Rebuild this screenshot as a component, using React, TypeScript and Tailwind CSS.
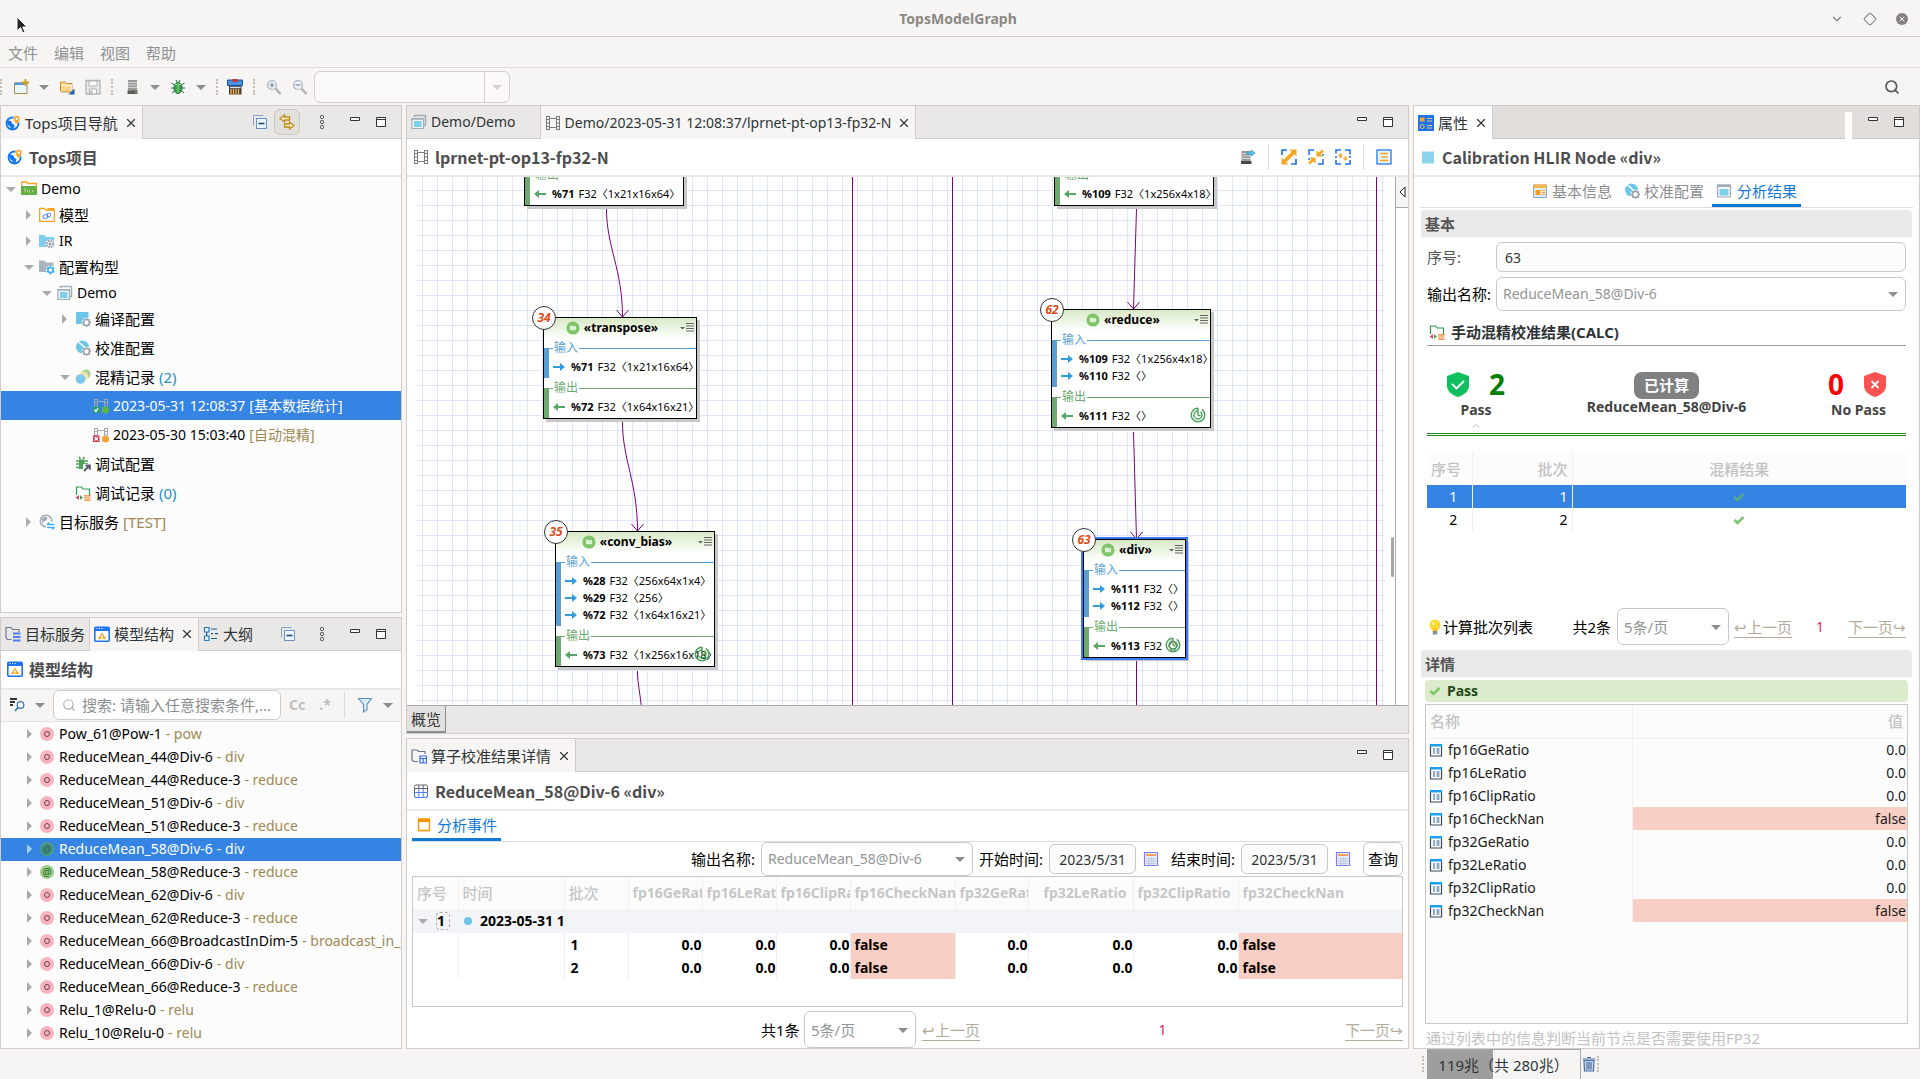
import { ReactNode } from 'react';
import clsx from 'clsx';
import { ChevronDown, ChevronUp, Diamond, Search, X } from 'lucide-react';

/* ---------- icons ---------- */

function Svg({ children, size = 'size-4' }: { children: ReactNode; size?: string }) {
  return (
    <svg viewBox="0 0 16 16" className={clsx(size, 'shrink-0')} fill="none">
      {children}
    </svg>
  );
}

const GEAR = (
  <g>
    <circle cx="11.5" cy="11.5" r="3" fill="none" stroke="#98a2ab" strokeWidth="1.6" />
    <path d="M11.5 7v1.5M11.5 14.500v1.500M7 11.500h1.500M14.500 11.500h1.500M8.300 8.300l1 1M13.700 13.700l1 1M8.300 14.700l1-1M13.700 9.300l1-1" stroke="#98a2ab" strokeWidth="1.300" />
  </g>
);

const FILM = (
  <path d="M1.500 1v14M4.500 1v14M11.500 1v14M14.500 1v14M4.500 3.500h7M4.500 12.500h7M1.500 1.500h3M1.500 4.500h3M1.500 8h3M1.500 11.500h3M1.500 14.500h3M11.500 1.500h3M11.500 4.500h3M11.500 8h3M11.500 11.500h3M11.500 14.500h3" />
);

function Icon({ name, size }: { name: string; size?: string }) {
  switch (name) {
    case 'globe':
      return (
        <Svg size={size}>
          <circle cx="7.500" cy="8.500" r="6" stroke="#1677f0" strokeWidth="1.800" />
          <path d="M2 5.500l4 .5 1.500 3 2 1-.5 3-2 1.500-2-3-2.500-2z" fill="#1677f0" />
          <path d="M11.500 9.500C9 6.500 8.500 5 8.500 3.700a3.200 3.200 0 016.400 0c0 1.300-.9 2.800-3.400 5.800z" fill="#f5a623" stroke="#fff" strokeWidth=".5" />
          <circle cx="11.700" cy="3.700" r="1.200" fill="#fff" />
        </Svg>
      );
    case 'square':
      return (
        <Svg size={size}>
          <path d="M2 2.500h12v12H2z" fill="#8dd3ed" />
        </Svg>
      );
    case 'topsFolder':
      return (
        <Svg size={size}>
          <path d="M.7 5V1h5l1.300 1.500h8.300V5" stroke="#f5a623" strokeWidth="1.300" />
          <path d="M0 5h16v9H0z" fill="#65b042" />
          <path d="M3 8h2M4 8v3M6.500 9v2M8.500 9v3M11.500 9v2" stroke="#c5e6b4" strokeWidth=".8" />
        </Svg>
      );
    case 'modelFolder':
      return (
        <Svg size={size}>
          <path d="M.7 14.300V1.500h5L7 3h8.300v11.300z" fill="#fff" stroke="#f5a623" strokeWidth="1.300" />
          <path d="M8.500 1h7v2.500h-7z" fill="#f5a623" />
          <ellipse cx="6.500" cy="9.500" rx="2.500" ry="2" stroke="#4a86e8" transform="rotate(-20 6.500 9.500)" />
          <ellipse cx="9.800" cy="8" rx="2" ry="1.800" stroke="#4a86e8" />
        </Svg>
      );
    case 'irFolder':
      return (
        <Svg size={size}>
          <path d="M0 2h5.500L7 4h8v10H0z" fill="#7fcdea" />
          <circle cx="11" cy="11" r="4.500" fill="#fff" />
          <circle cx="11" cy="11" r="3.200" stroke="#98a2ab" strokeWidth="2.200" strokeDasharray="1.500 1" />
          <circle cx="11" cy="11" r="1.500" fill="#98a2ab" />
        </Svg>
      );
    case 'cfgFolder':
      return (
        <Svg size={size}>
          <path d="M0 1.500h5.500L7 3.500h7.500V13H0z" fill="#a9b4bc" />
          <circle cx="11.500" cy="11" r="4.500" fill="#fff" />
          <circle cx="11.500" cy="11" r="2.600" stroke="#41b0e4" strokeWidth="1.600" />
          <path d="M11.500 6.500v2M11.500 13.500v2M7.600 8.800l1.700 1M13.700 12.200l1.700 1M7.600 13.200l1.700-1M13.700 9.800l1.700-1" stroke="#41b0e4" strokeWidth="1.500" />
        </Svg>
      );
    case 'windows':
      return (
        <Svg size={size}>
          <path d="M3.500 3V1.500h11v10H13" stroke="#a3adb5" strokeWidth="1.400" />
          <path d="M1 4.500h11.500v10H1z" fill="#eef8fc" stroke="#a3adb5" strokeWidth="1.200" />
          <path d="M3 7h7.500v6H3z" fill="#7fcfe9" />
          <path d="M.5 4h12.500v1.700H.5z" fill="#a3adb5" />
        </Svg>
      );
    case 'window':
      return (
        <Svg size={size}>
          <path d="M1.500 2h13v12h-13z" fill="#eef8fc" stroke="#a3adb5" strokeWidth="1.200" />
          <path d="M3.500 6h9v6.500h-9z" fill="#7fcfe9" />
          <path d="M1 1.500h14v2.500H1z" fill="#a3adb5" />
        </Svg>
      );
    case 'compileCfg':
      return (
        <Svg size={size}>
          <path d="M1 1h12.500v12H1z" fill="#6cc6ea" />
          <circle cx="11.500" cy="11.500" r="4.800" fill="#fff" />
          {GEAR}
        </Svg>
      );
    case 'calibCfg':
      return (
        <Svg size={size}>
          <circle cx="7.500" cy="7" r="6.500" fill="#6cc6ea" />
          <path d="M3 1.500l9 8" stroke="#fff" strokeWidth="1.500" />
          <circle cx="11.500" cy="11.500" r="4.800" fill="#fff" />
          {GEAR}
        </Svg>
      );
    case 'mix':
      return (
        <Svg size={size}>
          <circle cx="11" cy="5" r="4.500" fill="#a8d08d" />
          <circle cx="8.500" cy="7.500" r="4.700" fill="#fbe0b0" />
          <circle cx="5.500" cy="10" r="4.800" fill="#7cc9ef" />
        </Svg>
      );
    case 'filmOk':
      return (
        <Svg size={size}>
          <g stroke="#a9adb3" strokeWidth=".9">{FILM}</g>
          <path d="M0 8.500h6.500V15H0z" fill="#1fa05a" />
          <path d="M1.500 11.500l1.500 2 2-3.500" stroke="#fff" strokeWidth="1.300" />
          <path d="M7 8.500h9V16H7z" fill="#3584e4" />
          <circle cx="12.500" cy="12" r="3.500" fill="#5fb742" />
        </Svg>
      );
    case 'filmErr':
      return (
        <Svg size={size}>
          <g stroke="#9a9da1" strokeWidth=".9">{FILM}</g>
          <path d="M0 8.500h6.500V15H0z" fill="#d9364f" />
          <path d="M1.500 10l3.500 3.500M5 10l-3.500 3.500" stroke="#fff" strokeWidth="1.200" />
          <path d="M7 8.500h9V16H7z" fill="#fcfcfc" />
          <circle cx="12.500" cy="12" r="3.500" fill="#f5a535" />
        </Svg>
      );
    case 'film':
      return (
        <Svg size={size}>
          <g stroke="#6f6f6f" strokeWidth=".9">{FILM}</g>
        </Svg>
      );
    case 'bugCfg':
      return (
        <Svg size={size}>
          <path d="M4 3.500h5.500v9.500H4z" fill="#4fa05c" />
          <path d="M1 5h12M1 8h12M1 11.500h7M4 1l1.500 2M9.500 1L8 3" stroke="#4fa05c" strokeWidth="1.600" />
          <path d="M8 8h8v8H8z" fill="#fff" />
          <path d="M9 15l5-5M10.500 9.500h4.300v4.300" stroke="#55606a" strokeWidth="2" />
        </Svg>
      );
    case 'recordFolder':
      return (
        <Svg size={size}>
          <path d="M1.500 10V2h5L8 4h6.500v7" stroke="#2d9a55" strokeWidth="1.200" />
          <path d="M4 10v5l-3.500-2.500z" fill="#e0485f" />
          <path d="M5 10v5l3-2.500z" fill="#4fa05c" />
          <path d="M9 10.800h6.500M9 13h6.500M9 15.200h6.500" stroke="#f07c1f" strokeWidth="1.200" />
        </Svg>
      );
    case 'target':
      return (
        <Svg size={size}>
          <circle cx="7" cy="7" r="5.800" stroke="#a3adb5" strokeWidth="1.500" />
          <path d="M2.500 5l3-2.500 3 1-1 3-3 1-1 3z" fill="#a3adb5" />
          <path d="M7 8h9v8H7z" fill="#fff" />
          <path d="M8 10.500h7.500M8 13.500h7.500M10.500 8.500L8 10.500M13 15.500l2.500-2" stroke="#41b0e4" strokeWidth="1.300" />
        </Svg>
      );
    case 'collapse':
      return (
        <Svg size={size}>
          <path d="M1.500 11.500v-10h10" stroke="#8aa4c8" />
          <path d="M4.500 4.500h10v10h-10z" fill="#eaf6ff" stroke="#6c8fbf" />
          <path d="M6.500 9.500h6" stroke="#23456f" strokeWidth="1.600" />
        </Svg>
      );
    case 'link':
      return (
        <Svg size={size}>
          <path d="M5.500 1L1 4.500 5.500 8V6H10.500V3H5.500z" fill="#fdf0c8" stroke="#c08a1e" strokeWidth="1.300" />
          <path d="M10.500 8L15 11.500 10.500 15V13H5.500v-3h5z" fill="#fdf0c8" stroke="#c08a1e" strokeWidth="1.300" />
        </Svg>
      );
    case 'more':
      return (
        <Svg size={size}>
          <g stroke="#555" strokeWidth=".9">
            <circle cx="8" cy="3" r="1.700" />
            <circle cx="8" cy="8" r="1.700" />
            <circle cx="8" cy="13" r="1.700" />
          </g>
        </Svg>
      );
    case 'folderServer':
      return (
        <Svg size={size}>
          <path d="M6.500 13.500H2.500L1 12V1.500h5L7.500 3.500h6.500V6" stroke="#6e7b8f" strokeWidth="1.200" />
          <path d="M8 7.500h7.500M8 11h7.500M8 14.500h7.500" stroke="#4f7df0" strokeWidth="2.200" />
        </Svg>
      );
    case 'folderTable':
      return (
        <Svg size={size}>
          <path d="M7 13.500H2.500L1 12V2h5l1.500 1.500h6.500V6" stroke="#6e7486" strokeWidth="1.200" />
          <path d="M9 8h6.500v7H9zM9 10.500h6.500M12.200 10.500V15" stroke="#2f6df0" strokeWidth="1.200" />
        </Svg>
      );
    case 'model':
      return (
        <Svg size={size}>
          <rect x=".8" y="1.300" width="14.400" height="13.900" rx="1" fill="#fff" stroke="#1f74ee" strokeWidth="1.600" />
          <path d="M1 1h14v4H1z" fill="#1f74ee" />
          <path d="M2.500 2.500h1M5 2.500h1M7.500 2.500h1" stroke="#fff" />
          <path d="M8 7.500L5.500 12h5z" stroke="#f5a623" strokeWidth="1.200" />
          <circle cx="5.500" cy="12" r="1.200" fill="#f5a623" />
          <circle cx="10.500" cy="12" r="1.200" fill="#f5a623" />
        </Svg>
      );
    case 'outline':
      return (
        <Svg size={size}>
          <path d="M1.500 1.500h4.500v4.500H1.500zM1.500 10h4.500v4.500H1.500z" fill="#e6f3fb" stroke="#2a7ab8" strokeWidth="1.200" />
          <path d="M8 3h6M8 12.500h6M3.700 6v4M8 7.700h2M12 7.700h3" stroke="#1e5a8c" strokeWidth="1.200" />
        </Svg>
      );
    case 'table':
      return (
        <Svg size={size}>
          <rect x="1.500" y="2" width="13" height="12.500" rx="1.500" stroke="#5e6470" />
          <path d="M1.500 5.500h13M5.800 2v4M10.200 2v4" stroke="#5e6470" />
          <path d="M1.500 9.500v3.500q0 1.500 1.500 1.500h10q1.500 0 1.500-1.500V9.500zM5.800 6v8.500M10.200 6v8.500" stroke="#4f7df0" />
        </Svg>
      );
    case 'orangeWin':
      return (
        <Svg size={size}>
          <path d="M2.500 2.500h11v11h-11z" stroke="#f59300" strokeWidth="1.300" />
          <path d="M2 1.500h12v3.500H2z" fill="#f59300" />
        </Svg>
      );
    case 'calendar':
      return (
        <Svg size={size}>
          <path d="M1.500 1.500h13v13h-13z" fill="#eceffc" stroke="#7f7ff0" strokeWidth="1.200" />
          <path d="M3 3h10v2H3z" fill="#f0a05a" />
          <path d="M3 7.500h10M3 10h10M3 12.500h10M5.500 6v8M8 6v8M10.500 6v8" stroke="#b9c2e6" strokeWidth=".8" />
        </Svg>
      );
    case 'props':
      return (
        <Svg size={size}>
          <path d="M0 0h16v16H0z" fill="#1f74ee" />
          <path d="M2 2.500h4.500v4H2z" fill="#f5a623" />
          <path d="M9 3.500h5M9 6h5M9 10.500h5M9 13h5" stroke="#f5c060" strokeWidth="1" />
          <circle cx="4.200" cy="11.500" r="2" stroke="#f5c060" />
        </Svg>
      );
    case 'form':
      return (
        <Svg size={size}>
          <path d="M1.500 2h13v12.500h-13z" fill="#dcebfa" stroke="#8fa6bf" />
          <path d="M1.500 1.500h13V5h-13z" fill="#f7b64a" />
          <path d="M3.500 7h5v5h-5z" fill="#f59d24" />
          <path d="M10 7.500h3M10 9.500h3M10 11.500h3" stroke="#f59d24" />
        </Svg>
      );
    case 'field':
      return (
        <Svg size={size}>
          <path d="M2.500 2.500h11v11.500h-11z" fill="#fff" stroke="#3b4a58" strokeWidth="1.200" />
          <path d="M2 2h12v2.500H2z" fill="#1ba1f2" />
          <path d="M5 7h2M8.500 7h3M5 9h2M8.500 9h3M5 11h2M8.500 11h3" stroke="#1f5a96" />
        </Svg>
      );
    case 'server':
      return (
        <Svg size={size}>
          <path d="M4 1h9v11H4z" fill="#9a9a9a" />
          <path d="M4 3.500h9M4 6h9M4 8.500h9" stroke="#d5d5d5" />
          <path d="M3.500 11.500h10v3.500h-10z" fill="#5a5a5a" />
          <path d="M11 13.500h2" stroke="#6c6" />
        </Svg>
      );
    case 'serverExport':
      return (
        <Svg size={size}>
          <path d="M1.500 2h9v10h-9z" fill="#9a9a9a" />
          <path d="M1.500 4.500h9M1.500 7h9M1.500 9.500h9" stroke="#d5d5d5" />
          <path d="M1 12h10.500v3H1z" fill="#4a4a4a" />
          <path d="M7 3h4.500V1L15 4l-3.500 3V5H7z" fill="#5cc3f0" stroke="#1a86c0" strokeWidth=".6" />
        </Svg>
      );
    case 'new':
      return (
        <Svg size={size}>
          <path d="M1.500 4h12.500v10.500H1.500z" fill="#eaf5fc" stroke="#a58a4e" />
          <path d="M1.500 3.500h10v2.500h-10z" fill="#5b97d5" />
          <path d="M12.500 0v7M9 3.500h7" stroke="#c79b1e" strokeWidth="1.800" />
        </Svg>
      );
    case 'open':
      return (
        <Svg size={size}>
          <path d="M1.500 12V3h4.500L7.500 4.500h5.500v8.500H3z" fill="#f9d58e" stroke="#c88f2e" />
          <path d="M3 6.500h9.500V12" stroke="#fdeec6" strokeWidth="1.500" />
          <path d="M15.500 9.500v6h-6z" fill="#1b64a8" />
        </Svg>
      );
    case 'save':
      return (
        <Svg size={size}>
          <path d="M1 1.500h14v13.500H1z" fill="#e8e8e8" stroke="#b5b5b5" strokeWidth="1.300" />
          <path d="M4 2h8v5H4zM4.500 10h7v5h-7z" fill="#fafafa" stroke="#b5b5b5" />
          <path d="M5.500 11.500h2V15h-2z" fill="#b5b5b5" />
        </Svg>
      );
    case 'bug':
      return (
        <Svg size={size}>
          <path d="M1.500 4l3 2M14.500 4l-3 2M1 9h3M15 9h-3M2 14l3-2.500M14 14l-3-2.500M6 1l1 2M10 1L9 3" stroke="#1f6b3a" />
          <ellipse cx="8" cy="9" rx="4" ry="5.500" fill="#3fa04e" stroke="#1f6b3a" />
          <path d="M5 5.500h6M8 6v8" stroke="#8fd694" />
        </Svg>
      );
    case 'shop':
      return (
        <Svg size={size}>
          <path d="M2 6.500h12.500v9H2z" fill="#4a3a30" />
          <path d="M4 10v5.500M6.500 10v5.500M9 10v5.500M11.500 10v5.500" stroke="#f3b860" strokeWidth="1.300" />
          <path d="M3 8.500h10.500" stroke="#cfe6fa" strokeWidth="1.500" />
          <path d="M.5 1h15v5.500H.5z" fill="#4a90e0" stroke="#1d4f96" />
          <path d="M5.500 0h5v3h-5z" fill="#c33" />
        </Svg>
      );
    case 'zoomIn':
    case 'zoomOut':
      return (
        <Svg size={size}>
          <circle cx="6" cy="6" r="4.500" fill="#eef1f6" stroke="#adb3bc" strokeWidth="1.200" />
          <path d="M9.500 9.500l5 5.500" stroke="#b2aea8" strokeWidth="2.200" />
          <path d={name === 'zoomIn' ? 'M3.500 6h5M6 3.500v5' : 'M3.500 6h5'} stroke="#7f8ba3" strokeWidth="1.200" />
        </Svg>
      );
    case 'expand':
      return (
        <Svg size={size}>
          <path d="M1 6V1h5M15 10v5h-5" stroke="#1f74ee" strokeWidth="1.700" />
          <path d="M8.500 .5h7v7L13.300 5.300 5.300 13.300 7.500 15.500h-7v-7L2.700 10.700 10.700 2.700z" fill="#f5a623" />
        </Svg>
      );
    case 'shrink':
      return (
        <Svg size={size}>
          <path d="M1 6V1h5M15 10v5h-5M1 9v2M15 7v-2" stroke="#1f74ee" strokeWidth="1.500" />
          <path d="M8.500 1.500v6h6L12.700 5.500 16 2.500 14 .5l-3 3zM7.500 14.500V8.500h-6L3.300 10.500 0 13.500l2 2 3-3z" fill="#f5a623" />
        </Svg>
      );
    case 'fit':
      return (
        <Svg size={size}>
          <path d="M1 4.500V1h5M10 1h5v4.500M15 11v4h-5M6 15H1v-4M1 7v2M15 7v2" stroke="#1f74ee" strokeWidth="1.600" />
          <path d="M5.500 4l2.500 3H6.500v2h-2V7H3zM10.500 12L8 9.500h1.500V7.500h2v2H13z" fill="#f5a623" />
        </Svg>
      );
    case 'list':
      return (
        <Svg size={size}>
          <path d="M1 1h14v14H1z" fill="#eaf4ff" stroke="#3f86f0" strokeWidth="1.500" />
          <path d="M4 4.500h8M5.500 8h6M4 11.500h8" stroke="#f5a623" strokeWidth="1.600" />
        </Svg>
      );
    case 'sort':
      return (
        <Svg size={size}>
          <path d="M1 2h7M1 5h5M1 8h3" stroke="#333" strokeWidth="2" />
          <circle cx="11.500" cy="8" r="3.300" stroke="#3a7ab8" strokeWidth="1.300" />
          <path d="M9 10.500L6 14" stroke="#3a7ab8" strokeWidth="1.800" />
        </Svg>
      );
    case 'filter':
      return (
        <Svg size={size}>
          <path d="M1.500 1.500h13L10 7.500v5l-3.500 2.500V7.500z" fill="#d9ecf9" stroke="#5b8fc0" strokeWidth="1.100" />
        </Svg>
      );
    case 'trash':
      return (
        <Svg size={size}>
          <path d="M3 4.500h10l-.5 10.500h-9z" fill="#c6d6ec" stroke="#4c6ea4" strokeWidth="1.200" />
          <path d="M1.500 3h13M6 1.500h4M6 6v7.500M10 6v7.500M8 6v7.500" stroke="#4c6ea4" strokeWidth="1.200" />
        </Svg>
      );
    case 'tick':
      return (
        <Svg size={size}>
          <path d="M2 8l4 4 8-8" stroke="#82c66c" strokeWidth="3.500" />
        </Svg>
      );
    case 'tickBlue':
      return (
        <Svg size={size}>
          <path d="M2 8l4 4 8-8" stroke="#57a985" strokeWidth="3.500" />
        </Svg>
      );
    case 'bulb':
      return (
        <Svg size={size}>
          <circle cx="8" cy="6" r="5.500" fill="#fdd835" />
          <path d="M5.500 9.500h5v2.500h-5z" fill="#fbc02d" />
          <path d="M5.800 12h4.400v3.500H5.800z" fill="#7b8f99" />
          <circle cx="6.500" cy="4.500" r="1.500" fill="#fff59d" />
        </Svg>
      );
    case 'spiral':
      return (
        <Svg size={size}>
          <path d="M8 1.200A6.800 6.800 0 1 0 14.800 8c0-2.500-1.200-4.500-3-5.700M8 4a4 4 0 1 0 4 4c0-1.300-.5-2.300-1.500-3.200M8 1v7.500M8 8.500h2.500" stroke="#4aa05a" strokeWidth="1.400" />
        </Svg>
      );
    case 'wave':
      return (
        <Svg size={size}>
          <circle cx="8" cy="8" r="7.500" fill="#80c46c" />
          <path d="M4.500 11V5.500c2-1.500 3.500 1.500 7 0V10c-3 2-4-1.200-7 1z" fill="#dcf2d3" />
        </Svg>
      );
    default:
      return <Svg size={size}>{null}</Svg>;
  }
}

function Tri({ right, className = 'text-[#8b8e8f]' }: { right?: boolean; className?: string }) {
  return (
    <svg viewBox="0 0 10 10" className={clsx('size-2.5 shrink-0', className)}>
      <path d={right ? 'M2 0l5 5-5 5z' : 'M0 3h10L5 8z'} fill="currentColor" />
    </svg>
  );
}

function Grip() {
  return <span className="h-4 w-[3px] shrink-0 border-l-2 border-dotted border-[#c3bdb5]" />;
}

/* ---------- panel pieces ---------- */

function MinMax() {
  return (
    <div className="flex items-center gap-4 pr-[15px] pl-4">
      <button aria-label="最小化">
        <svg viewBox="0 0 10 10" className="size-2.5"><path d="M.5 .5h9v3h-9z" fill="#fff" stroke="#333" /></svg>
      </button>
      <button aria-label="最大化">
        <svg viewBox="0 0 10 10" className="size-2.5"><path d="M.5 .5h9v9h-9zM0 2.500h10" fill="#fff" stroke="#333" /></svg>
      </button>
    </div>
  );
}

interface TabProps {
  icon: string;
  label: string;
  active?: boolean;
  close?: boolean;
  latin?: boolean;
  className?: string;
}

function Tab({ icon, label, active, close, latin, className }: TabProps) {
  return (
    <div
      className={clsx(
        'flex h-[33px] shrink-0 items-center gap-1 border-r border-[#d1ccc7] pl-1',
        active ? 'bg-[#f6f5f4]' : 'border-b',
        className
      )}
    >
      <Icon name={icon} />
      <button className={clsx('whitespace-nowrap text-[#2e3436]', latin && 'text-sm')}>{label}</button>
      {close && (
        <button aria-label="关闭" className="mr-1 ml-0.5">
          <X className="size-3.5 text-[#333]" strokeWidth={2} />
        </button>
      )}
    </div>
  );
}

interface PanelTitleProps {
  icon: string;
  children: ReactNode;
  tools?: ReactNode;
  tall?: boolean;
}

function PanelTitle({ icon, children, tools, tall }: PanelTitleProps) {
  return (
    <header
      className={clsx(
        'flex shrink-0 items-center gap-1.5 border-b-2 border-[#e8e8e8] bg-white px-1.5',
        tall ? 'h-[39px]' : 'h-[38px]'
      )}
    >
      <Icon name={icon} />
      <h2 className="flex-1 truncate font-['Noto_Sans_CJK_SC',sans-serif] text-base leading-6 font-bold text-[#4d4d4d]">
        {children}
      </h2>
      {tools}
    </header>
  );
}

function Panel({ className, children }: { className?: string; children: ReactNode }) {
  return (
    <section className={clsx('flex min-h-0 min-w-0 flex-col border border-[#d1ccc7]', className)}>
      {children}
    </section>
  );
}

function Dropdown({ id, label, value, className }: { id: string; label: string; value: string; className?: string }) {
  return (
    <div className={clsx('relative', className)}>
      <select
        id={id}
        aria-label={label}
        className="h-full w-full appearance-none rounded-md border border-[#cdc7c2] bg-white px-1.5 text-[#929595]"
      >
        <option>{value}</option>
      </select>
      <span className="pointer-events-none absolute top-1/2 right-2 -translate-y-1/2">
        <Tri />
      </span>
    </div>
  );
}

function PageLink({ children }: { children: ReactNode }) {
  return (
    <a href="#" className="whitespace-nowrap text-[#b5ab9b] underline underline-offset-4">
      {children}
    </a>
  );
}

/* ---------- top bars ---------- */

function TopBars() {
  return (
    <div className="shrink-0">
      <div className="relative flex h-[37px] items-center justify-center border-b border-[#d5d0cc] pt-0.5 pr-1">
        <h1 className="text-sm font-bold text-[#8b8885]">TopsModelGraph</h1>
        <svg viewBox="0 0 12 18" className="absolute top-4 left-4 h-[18px] w-3">
          <path d="M1 1v14l3.500-3.500 2.300 5.500 2.200-1-2.300-5H11z" fill="#222" stroke="#fff" />
        </svg>
        <div className="absolute right-3 flex items-center gap-[19px] text-[#85817e]">
          <button aria-label="最小化"><ChevronDown className="size-3.5" strokeWidth={2} /></button>
          <button aria-label="最大化"><Diamond className="size-3.5" strokeWidth={1.8} /></button>
          <button aria-label="关闭" className="flex size-3 items-center justify-center rounded-full bg-[#85817e]">
            <X className="size-2 text-white" strokeWidth={3} />
          </button>
        </div>
      </div>
      <nav className="flex h-[31px] items-center gap-4 border-b border-[#dedbd8] px-2 pt-0.5 text-[#8e9192]">
        {['文件', '编辑', '视图', '帮助'].map((m) => (
          <button key={m}>{m}</button>
        ))}
      </nav>
      <div className="flex h-[37px] items-center gap-2.5 pr-5">
        <Grip />
        <button aria-label="新建"><Icon name="new" /></button>
        <Tri />
        <button aria-label="打开"><Icon name="open" /></button>
        <button aria-label="保存"><Icon name="save" /></button>
        <Grip />
        <button aria-label="服务"><Icon name="server" /></button>
        <Tri />
        <button aria-label="调试"><Icon name="bug" /></button>
        <Tri />
        <Grip />
        <button aria-label="商店" className="-ml-0.5"><Icon name="shop" /></button>
        <Grip />
        <button aria-label="放大"><Icon name="zoomIn" /></button>
        <button aria-label="缩小"><Icon name="zoomOut" /></button>
        <div className="-ml-1 flex h-8 w-[196px] rounded-md border border-[#d5d0cc] bg-[#faf9f8]">
          <input aria-label="缩放比例" className="min-w-0 flex-1 border-r border-[#d5d0cc]" />
          <button aria-label="缩放" className="flex w-6 items-center justify-center">
            <Tri className="text-[#d5d0cc]" />
          </button>
        </div>
        <button aria-label="搜索" className="ml-auto">
          <Search className="size-4 text-[#555]" strokeWidth={2.5} />
        </button>
      </div>
    </div>
  );
}

/* ---------- project tree ---------- */

const INDENT = ['pl-[5px]', 'pl-[23px]', 'pl-[41px]', 'pl-[59px]', 'pl-[77px]'];

interface TreeItem {
  level: number;
  icon: string;
  label: string;
  note?: string;
  noteColor?: string;
  arrow?: 'open' | 'closed';
  latin?: boolean;
  dated?: boolean;
  selected?: boolean;
}

const TREE: TreeItem[] = [
  { level: 0, icon: 'topsFolder', label: 'Demo', arrow: 'open', latin: true },
  { level: 1, icon: 'modelFolder', label: '模型', arrow: 'closed' },
  { level: 1, icon: 'irFolder', label: 'IR', arrow: 'closed', latin: true },
  { level: 1, icon: 'cfgFolder', label: '配置构型', arrow: 'open' },
  { level: 2, icon: 'windows', label: 'Demo', arrow: 'open', latin: true },
  { level: 3, icon: 'compileCfg', label: '编译配置', arrow: 'closed' },
  { level: 3, icon: 'calibCfg', label: '校准配置' },
  { level: 3, icon: 'mix', label: '混精记录', note: '(2)', noteColor: 'text-[#1f8fc0]', arrow: 'open' },
  { level: 4, icon: 'filmOk', label: '2023-05-31 12:08:37', note: '[基本数据统计]', dated: true, selected: true },
  { level: 4, icon: 'filmErr', label: '2023-05-30 15:03:40', note: '[自动混精]', noteColor: 'text-[#a08850]', dated: true },
  { level: 3, icon: 'bugCfg', label: '调试配置' },
  { level: 3, icon: 'recordFolder', label: '调试记录', note: '(0)', noteColor: 'text-[#1f8fc0]' },
  { level: 1, icon: 'target', label: '目标服务', note: '[TEST]', noteColor: 'text-[#a08850]', arrow: 'closed' },
];

function ProjectPanel() {
  return (
    <Panel className="flex-[508]">
      <div className="flex h-[33px] shrink-0 bg-[#e9e8e6]">
        <Tab icon="globe" label="Tops项目导航" active close />
        <div className="flex flex-1 items-center justify-end border-b border-[#d1ccc7]">
          <button aria-label="全部折叠" className="mr-1.5"><Icon name="collapse" /></button>
          <button aria-label="链接编辑器" className="mr-3.5 flex size-[26px] items-center justify-center rounded-md border border-[#cdc9c3] bg-[#e2e0dc]">
            <Icon name="link" />
          </button>
          <button aria-label="菜单" className="mr-1"><Icon name="more" /></button>
          <MinMax />
        </div>
      </div>
      <PanelTitle icon="globe">Tops项目</PanelTitle>
      <ul className="min-h-0 flex-1 overflow-hidden bg-[#fcfcfc]">
        {TREE.map((item, i) => (
          <li
            key={i}
            className={clsx(
              'flex items-center whitespace-nowrap',
              INDENT[item.level],
              item.latin ? 'h-[23px] text-sm' : 'h-[29px]',
              item.selected ? 'bg-[#3584e4] text-white' : 'text-black'
            )}
          >
            <span className="mr-[5px] flex w-2.5">
              {item.arrow && <Tri right={item.arrow === 'closed'} className="text-[#a9abab]" />}
            </span>
            <Icon name={item.icon} />
            <span className={clsx('ml-1', item.dated && 'text-sm')}>{item.label}</span>
            {item.note && (
              <span className={clsx('ml-1', item.noteColor, item.dated && 'text-sm')}>{item.note}</span>
            )}
          </li>
        ))}
      </ul>
    </Panel>
  );
}

/* ---------- model structure ---------- */

const OPS = [
  ['Pow_61@Pow-1', 'pow'],
  ['ReduceMean_44@Div-6', 'div'],
  ['ReduceMean_44@Reduce-3', 'reduce'],
  ['ReduceMean_51@Div-6', 'div'],
  ['ReduceMean_51@Reduce-3', 'reduce'],
  ['ReduceMean_58@Div-6', 'div'],
  ['ReduceMean_58@Reduce-3', 'reduce'],
  ['ReduceMean_62@Div-6', 'div'],
  ['ReduceMean_62@Reduce-3', 'reduce'],
  ['ReduceMean_66@BroadcastInDim-5', 'broadcast_in_dim'],
  ['ReduceMean_66@Div-6', 'div'],
  ['ReduceMean_66@Reduce-3', 'reduce'],
  ['Relu_1@Relu-0', 'relu'],
  ['Relu_10@Relu-0', 'relu'],
];

function OpBadge({ index }: { index: number }) {
  const green = index === 5 || index === 6;
  return (
    <span
      className={clsx(
        'flex size-3.5 shrink-0 items-center justify-center rounded-full text-[10px] leading-none',
        index === 5 && 'bg-[#4a9c80] text-[#1d4f63]',
        index === 6 && 'bg-[#97ce85] text-[#2f5a2a]',
        !green && 'bg-[#f9b3c0]'
      )}
    >
      {green ? '@' : <i className="size-[6px] rounded-full border border-[#6d4550]" />}
    </span>
  );
}

function ModelPanel() {
  return (
    <Panel className="flex-[432]">
      <div className="flex h-[33px] shrink-0 bg-[#e9e8e6]">
        <Tab icon="folderServer" label="目标服务" className="pr-1" />
        <Tab icon="model" label="模型结构" active close />
        <div className="flex flex-1 items-center border-b border-[#d1ccc7] pl-1">
          <Icon name="outline" />
          <button className="ml-1 text-[#2e3436]">大纲</button>
          <div className="ml-auto flex items-center">
            <button aria-label="全部折叠" className="mr-[18px]"><Icon name="collapse" /></button>
            <button aria-label="菜单" className="mr-1"><Icon name="more" /></button>
            <MinMax />
          </div>
        </div>
      </div>
      <PanelTitle icon="model" tall>模型结构</PanelTitle>
      <div className="flex h-8 shrink-0 items-center border-b border-[#e4e2e0] bg-[#f6f5f4] pl-2">
        <Icon name="sort" />
        <span className="ml-2.5"><Tri /></span>
        <label className="ml-2 flex h-[30px] w-[228px] items-center gap-1.5 rounded-md border border-[#d1ccc7] bg-white pr-0.5 pl-2">
          <Search className="size-3.5 shrink-0 text-[#aaa]" strokeWidth={2} />
          <input
            aria-label="搜索"
            className="min-w-0 flex-1 placeholder:text-[#8b8e8f]"
            placeholder="搜索: 请输入任意搜索条件,..."
          />
        </label>
        <button className="ml-2 text-sm font-bold text-[#bdc0c0]">Cc</button>
        <button className="ml-3.5 text-sm font-bold text-[#bdc0c0]">.*</button>
        <span className="mr-3 ml-auto h-[26px] border-l border-[#dcd9d6]" />
        <Icon name="filter" />
        <span className="mr-2 ml-2.5"><Tri /></span>
      </div>
      <ul className="min-h-0 flex-1 overflow-hidden bg-[#fcfcfc] pt-px text-sm">
        {OPS.map(([name, kind], i) => (
          <li
            key={name}
            className={clsx('flex h-[23px] items-center pl-6 whitespace-nowrap', i === 5 ? 'bg-[#3584e4] text-white' : 'text-black')}
          >
            <Tri right className={i === 5 ? 'text-[#a9cdf5]' : 'text-[#a9abab]'} />
            <span className="mx-[5px]"><OpBadge index={i} /></span>
            <span>{name}</span>
            <span className={clsx('ml-1', i !== 5 && 'text-[#a08850]')}>- {kind}</span>
          </li>
        ))}
      </ul>
    </Panel>
  );
}

/* ---------- graph canvas ---------- */

function Port({ out, id, shape }: { out?: boolean; id: string; shape: string }) {
  return (
    <div className="flex h-[17px] items-center pl-1 whitespace-nowrap text-black">
      <svg viewBox="0 0 12 10" className={clsx('h-2.5 w-3 shrink-0', out ? 'text-[#58a566]' : 'text-[#349bd9]')}>
        <path
          d={out ? 'M12 4H5V1L0 5l5 4V6h7z' : 'M0 4h7V1l5 4-5 4V6H0z'}
          fill="currentColor"
        />
      </svg>
      <b className="ml-1.5 text-[11px]">{id}</b>
      <span className="ml-1 text-[11px]">F32{shape}</span>
    </div>
  );
}

interface NodeProps {
  at: string;
  no?: string;
  title?: string;
  inputs?: [string, string][];
  output: [string, string];
  selected?: boolean;
  spiral?: boolean;
}

function GraphNode({ at, no, title, inputs, output, selected, spiral }: NodeProps) {
  return (
    <article
      className={clsx(
        'absolute border border-black bg-white shadow-[3px_3px_0_#c8c8c8]',
        selected && 'outline-2 outline-[#3b78f5]',
        at
      )}
    >
      {title && (
        <div className="flex h-[30px] items-start bg-linear-to-b from-[#d8e9c6] to-white to-70% pt-0.5 pr-0.5 text-black">
          <div className="flex flex-1 items-center justify-center gap-1">
            <Icon name="wave" size="size-3.5" />
            <h3 className="text-[12px] leading-4 font-bold">«{title}»</h3>
          </div>
          <button aria-label="菜单">
            <svg viewBox="0 0 14 10" className="mt-[3px] h-2.5 w-3.5">
              <path d="M0 4h5L2.500 6.500z" fill="#666" />
              <path d="M6 .5h8M6 3h8M6 5.500h8M6 8h8" stroke="#666" />
            </svg>
          </button>
        </div>
      )}
      {inputs && (
        <div className="relative mb-2.5 border-l-5 border-[#5a9fd4] pt-2.5 pb-[3px]">
          <span className="absolute inset-x-0 top-0 border-t border-[#5a9fd4]" />
          <span className="absolute -top-2 left-1 bg-white px-px text-[12px] leading-4 text-[#5a9fd4]">输入</span>
          {inputs.map(([id, shape]) => (
            <Port key={id} id={id} shape={shape} />
          ))}
        </div>
      )}
      <div className="relative border-l-5 border-[#6fa870] pt-2.5 pb-[3px]">
        <span className="absolute inset-x-0 top-0 border-t border-[#6fa870]" />
        <span className="absolute -top-2 left-1 bg-white px-px text-[12px] leading-4 text-[#6fa870]">输出</span>
        <Port out id={output[0]} shape={output[1]} />
        {spiral && (
          <span className="absolute right-1 bottom-1">
            <Icon name="spiral" size="size-4" />
          </span>
        )}
      </div>
      {no && (
        <span className="absolute -top-3 -left-3 flex size-6 items-center justify-center rounded-full border border-[#333] bg-white text-[12px] font-bold text-[#e04a18] italic">
          {no}
        </span>
      )}
    </article>
  );
}

function Canvas() {
  return (
    <div className="flex min-h-0 flex-1 border-b border-[#a9a9a9] bg-white">
      <div className="relative min-w-0 flex-1 overflow-hidden">
        <svg className="absolute inset-0 size-full">
          <defs>
            <pattern id="grid" x="15" y="13" width="15" height="15" patternUnits="userSpaceOnUse">
              <path d="M0 .5h15M.5 0v15" stroke="#dfe5f8" />
            </pattern>
          </defs>
          <rect x="10" y="0" width="968" height="100%" fill="url(#grid)" />
          <g stroke="#800080" fill="none">
            <path d="M445.500 0v600M545.500 0v600M969.500 0v600" />
            <path d="M199.500 32c0 38 16 60 16 108M209.500 133l6 7 6-7" />
            <path d="M215.500 245c0 38 15 60 15 109M224.500 347l6 7 6-7" />
            <path d="M230.500 494c0 14 3 22 4 40" />
            <path d="M729.500 32l-3 100M720.500 125l6 7 6-7" />
            <path d="M726.500 255l3 107M723.500 355l6 7 6-7" />
            <path d="M729.500 484v60" />
          </g>
        </svg>
        <GraphNode at="-top-[3px] left-[117px] w-[160px]" output={['%71', '〈1x21x16x64〉']} />
        <GraphNode at="-top-[3px] left-[647px] w-[160px]" output={['%109', '〈1x256x4x18〉']} />
        <GraphNode
          at="top-[140px] left-[136px] w-[154px]"
          no="34"
          title="transpose"
          inputs={[['%71', '〈1x21x16x64〉']]}
          output={['%72', '〈1x64x16x21〉']}
        />
        <GraphNode
          at="top-[354px] left-[148px] w-[160px]"
          no="35"
          title="conv_bias"
          inputs={[['%28', '〈256x64x1x4〉'], ['%29', '〈256〉'], ['%72', '〈1x64x16x21〉']]}
          output={['%73', '〈1x256x16x18〉']}
          spiral
        />
        <GraphNode
          at="top-[132px] left-[644px] w-[160px]"
          no="62"
          title="reduce"
          inputs={[['%109', '〈1x256x4x18〉'], ['%110', '〈〉']]}
          output={['%111', '〈〉']}
          spiral
        />
        <GraphNode
          at="top-[362px] left-[676px] w-[103px]"
          no="63"
          title="div"
          inputs={[['%111', '〈〉'], ['%112', '〈〉']]}
          output={['%113', '〈〉']}
          selected
          spiral
        />
        <span className="absolute top-[360px] right-px h-10 w-[3px] rounded-full bg-[#a5a7a8]" />
      </div>
      <div className="w-[13px] shrink-0 border-l border-[#a9a9a9]">
        <button aria-label="展开面板" className="flex h-[31px] w-full items-center justify-center border-b border-[#a9a9a9] bg-[#f6f5f4]">
          <svg viewBox="0 0 7 12" className="h-3 w-[7px]"><path d="M6 1v10L1 6z" fill="#fff" stroke="#222" /></svg>
        </button>
      </div>
    </div>
  );
}

function EditorPanel() {
  return (
    <Panel className="flex-[630]">
      <div className="flex h-[33px] shrink-0 bg-[#e9e8e6]">
        <Tab icon="windows" label="Demo/Demo" latin className="pr-6" />
        <Tab icon="film" label="Demo/2023-05-31 12:08:37/lprnet-pt-op13-fp32-N" active close latin />
        <div className="flex flex-1 items-center justify-end border-b border-[#d1ccc7]">
          <MinMax />
        </div>
      </div>
      <PanelTitle
        icon="film"
        tools={
          <div className="flex items-center pr-2.5">
            <button aria-label="导出"><Icon name="serverExport" /></button>
            <span className="mx-3 h-[26px] border-l border-[#dcdcdc]" />
            <div className="flex gap-[11px]">
              <button aria-label="展开"><Icon name="expand" /></button>
              <button aria-label="收缩"><Icon name="shrink" /></button>
              <button aria-label="适应"><Icon name="fit" /></button>
            </div>
            <span className="mx-3 h-[26px] border-l border-[#dcdcdc]" />
            <button aria-label="列表"><Icon name="list" /></button>
          </div>
        }
      >
        lprnet-pt-op13-fp32-N
      </PanelTitle>
      <Canvas />
      <div className="flex h-[27px] shrink-0 items-start bg-[#e9e8e6]">
        <button className="h-[27px] border-r border-b-2 border-[#8f8f8f] bg-[#e4e2e0] px-1 pt-px text-[#2e3436]">概览</button>
      </div>
    </Panel>
  );
}

/* ---------- calibration detail ---------- */

const RESULT_COLS = [
  ['序号', 'w-[45px]'],
  ['时间', 'w-[106px]'],
  ['批次', 'w-16'],
  ['fp16GeRatio', 'w-[74px]'],
  ['fp16LeRatio', 'w-[74px]'],
  ['fp16ClipRatio', 'w-[74px]'],
  ['fp16CheckNan', 'w-[105px]'],
  ['fp32GeRatio', 'w-[73px]'],
  ['fp32LeRatio', 'w-[105px]'],
  ['fp32ClipRatio', 'w-[105px]'],
  ['fp32CheckNan', ''],
];

const RESULT_ROWS = [
  ['', '', '1', '0.0', '0.0', '0.0', 'false', '0.0', '0.0', '0.0', 'false'],
  ['', '', '2', '0.0', '0.0', '0.0', 'false', '0.0', '0.0', '0.0', 'false'],
];

function ResultPanel() {
  return (
    <Panel className="flex-[310] bg-white">
      <div className="flex h-[33px] shrink-0 bg-[#e9e8e6]">
        <Tab icon="folderTable" label="算子校准结果详情" active close />
        <div className="flex flex-1 items-center justify-end border-b border-[#d1ccc7]">
          <MinMax />
        </div>
      </div>
      <PanelTitle icon="table" tall>ReduceMean_58@Div-6 «div»</PanelTitle>
      <div className="flex min-h-0 flex-1 flex-col px-[5px]">
        <div className="flex h-[31px] shrink-0 border-b border-[#dedede]">
          <button className="flex items-center gap-[5px] border-b-3 border-[#1079d6] px-1 text-[#1079d6]">
            <Icon name="orangeWin" />
            分析事件
          </button>
        </div>
        <div className="flex h-[34px] shrink-0 items-center justify-end whitespace-nowrap text-black">
          <label htmlFor="out-name" className="mr-1.5">输出名称:</label>
          <Dropdown id="out-name" label="输出名称" value="ReduceMean_58@Div-6" className="h-[34px] w-[212px] text-sm" />
          <label htmlFor="start" className="mx-1.5">开始时间:</label>
          <input id="start" defaultValue="2023/5/31" className="h-[30px] w-[87px] rounded-md border border-[#cdc7c2] bg-[#fcfcfc] text-center text-sm text-[#2e3436]" />
          <button aria-label="选择开始时间" className="ml-[7px]"><Icon name="calendar" /></button>
          <label htmlFor="end" className="mr-1.5 ml-3">结束时间:</label>
          <input id="end" defaultValue="2023/5/31" className="h-[30px] w-[87px] rounded-md border border-[#cdc7c2] bg-[#fcfcfc] text-center text-sm text-[#2e3436]" />
          <button aria-label="选择结束时间" className="ml-[7px]"><Icon name="calendar" /></button>
          <button className="ml-3 h-[34px] rounded-md border border-[#cdc7c2] bg-white px-1">查询</button>
        </div>
        <div className="h-[131px] shrink-0 overflow-hidden border border-[#cdc7c2]">
          <table className="w-full table-fixed border-collapse text-sm font-bold text-black">
            <thead>
              <tr className="h-8 bg-[#fcfcfc] text-[#c6c6c6]">
                {RESULT_COLS.map(([name, width], i) => (
                  <th
                    key={name}
                    className={clsx(
                      'overflow-hidden border-r border-[#f0f0f0] pl-1 text-left whitespace-nowrap last:border-r-0',
                      width,
                      i < 3 && 'text-[15px] font-medium',
                      name === 'fp32LeRatio' && 'pl-[15px]'
                    )}
                  >
                    {name}
                  </th>
                ))}
              </tr>
            </thead>
            <tbody>
              <tr className="h-6 bg-[#f2f4f8]">
                <td>
                  <div className="flex items-center gap-2 pl-[5px]">
                    <Tri className="text-[#a9abab]" />
                    <span className="rounded-sm border border-dashed border-[#b0b0b0] pr-1 leading-4">1</span>
                  </div>
                </td>
                <td className="overflow-hidden">
                  <div className="flex items-center gap-2 pl-1.5 whitespace-nowrap">
                    <i className="size-2 shrink-0 rounded-full bg-[#6cc6ea]" />
                    <span className="overflow-hidden">2023-05-31 12:12:40</span>
                  </div>
                </td>
                <td colSpan={9} />
              </tr>
              {RESULT_ROWS.map((row, r) => (
                <tr key={r} className="h-[23px]">
                  {row.map((cell, i) => (
                    <td
                      key={i}
                      className={clsx(
                        'border-r border-[#f0f0f0] last:border-r-0',
                        cell === '0.0' && 'text-right',
                        cell === 'false' && 'bg-[#f9cfc5] pl-1',
                        i === 2 && 'pl-1.5'
                      )}
                    >
                      {cell}
                    </td>
                  ))}
                </tr>
              ))}
            </tbody>
          </table>
        </div>
        <div className="mt-1 flex h-[37px] shrink-0 items-center text-black">
          <span className="ml-[349px] w-[43px]">共1条</span>
          <Dropdown id="page-size" label="每页条数" value="5条/页" className="mr-1.5 h-[37px] w-[112px]" />
          <PageLink>↩上一页</PageLink>
          <span className="flex-1 text-center text-sm text-[#e8265e]">1</span>
          <PageLink>下一页↪</PageLink>
        </div>
      </div>
    </Panel>
  );
}

/* ---------- properties ---------- */

const PROPS = [
  ['fp16GeRatio', '0.0'],
  ['fp16LeRatio', '0.0'],
  ['fp16ClipRatio', '0.0'],
  ['fp16CheckNan', 'false'],
  ['fp32GeRatio', '0.0'],
  ['fp32LeRatio', '0.0'],
  ['fp32ClipRatio', '0.0'],
  ['fp32CheckNan', 'false'],
];

function Shield({ ok }: { ok?: boolean }) {
  return (
    <svg viewBox="0 0 22 25" className="h-[25px] w-[22px]">
      <path d="M11 0l11 4v10c0 5-5 9-11 11C5 23 0 19 0 14V4z" fill={ok ? '#0fc060' : '#fa5151'} />
      <path d={ok ? 'M5 12l4.500 4.500L17 9' : 'M7.500 9l7 7M14.500 9l-7 7'} stroke="#fff" strokeWidth="1.800" fill="none" />
    </svg>
  );
}

function SectionBar({ children }: { children: ReactNode }) {
  return (
    <h3 className="mx-px flex h-[27px] shrink-0 items-center rounded-t bg-[#e9e9e9] px-1 font-bold text-[#555]">
      {children}
    </h3>
  );
}

function PropertyPanel() {
  return (
    <Panel className="h-full bg-white">
      <div className="flex h-[33px] shrink-0 bg-[#e1dedb]">
        <Tab icon="props" label="属性" active close className="bg-white" />
        <div className="flex flex-1 items-center justify-end border-b border-[#cdc7c2]">
          <span className="mt-1.5 h-[27px] w-[7px] bg-white" />
          <MinMax />
        </div>
      </div>
      <PanelTitle icon="square">Calibration HLIR Node «div»</PanelTitle>
      <div className="flex min-h-0 flex-1 flex-col px-1.5">
        <div className="flex h-[31px] shrink-0 justify-center gap-1 border-b border-[#dedede] pr-1 text-[#8b8e8f]">
          <button className="flex items-center gap-1 border-b-3 border-transparent px-1"><Icon name="form" />基本信息</button>
          <button className="flex items-center gap-1 border-b-3 border-transparent px-1"><Icon name="calibCfg" />校准配置</button>
          <button className="flex items-center gap-[5px] border-b-3 border-[#1079d6] px-1 text-[#1079d6]"><Icon name="window" />分析结果</button>
        </div>
        <div className="h-[2px] shrink-0" />
        <SectionBar>基本</SectionBar>
        <div className="flex shrink-0 flex-col px-[7px] pt-[5px]">
          <div className="grid grid-cols-[69px_1fr] items-center gap-y-[5px]">
            <label htmlFor="seq" className="text-[#555]">序号:</label>
            <input id="seq" readOnly value="63" className="h-[30px] rounded-md border border-[#cdc7c2] bg-[#fcfcfc] px-2 text-sm text-[#2e3436]" />
            <label htmlFor="out" className="text-black">输出名称:</label>
            <Dropdown id="out" label="输出名称" value="ReduceMean_58@Div-6" className="h-[34px] text-sm" />
          </div>
          <h4 className="mt-2 flex h-[27px] items-center gap-1.5 border-b border-[#9a9a9a] pl-0.5 font-bold text-[#2e3436]">
            <Icon name="recordFolder" />
            手动混精校准结果(CALC)
          </h4>
          <div className="flex h-[90px] items-start justify-between border-b-3 border-double border-[#1b8a1b] px-5 pt-[22px] text-sm leading-5 font-bold text-[#444]">
            <div className="flex flex-col items-center">
              <div className="flex h-[32px] items-center gap-5">
                <Shield ok />
                <span className="text-[28px] leading-8 text-[#008000]">2</span>
              </div>
              <span>Pass</span>
              <ChevronUp className="size-3 text-[#bbb]" strokeWidth={2} />
            </div>
            <div className="flex flex-col items-center pt-1">
              <span className="rounded-lg bg-[#808080] px-2.5 text-[15px] leading-[27px] text-white">已计算</span>
              <span className="leading-4">ReduceMean_58@Div-6</span>
            </div>
            <div className="flex flex-col items-end">
              <div className="flex h-[32px] items-center gap-5">
                <span className="text-[28px] leading-8 text-[#f00]">0</span>
                <Shield />
              </div>
              <span>No Pass</span>
            </div>
          </div>
          <div className="mt-4 h-[156px]">
            <table className="w-full table-fixed border-collapse">
              <thead>
                <tr className="h-[33px] bg-[#fcfcfc] text-[#c2c2c2]">
                  <th className="w-[45px] border-r border-[#f0f0f0] pl-1 text-left font-medium">序号</th>
                  <th className="w-[100px] border-r border-[#f0f0f0] pr-1 text-right font-medium">批次</th>
                  <th className="text-center font-medium">混精结果</th>
                </tr>
              </thead>
              <tbody className="text-sm">
                {['1', '2'].map((n) => (
                  <tr key={n} className={clsx('h-[23px]', n === '1' ? 'bg-[#3584e4] text-white' : 'text-black')}>
                    <td className="border-r border-[#f0f0f0] pl-2 text-center">{n}</td>
                    <td className="border-r border-[#f0f0f0] pr-1 text-right">{n}</td>
                    <td>
                      <span className="flex justify-center"><Icon name={n === '1' ? 'tickBlue' : 'tick'} size="size-3" /></span>
                    </td>
                  </tr>
                ))}
              </tbody>
            </table>
          </div>
          <div className="flex h-[37px] items-center text-black">
            <Icon name="bulb" />
            <span className="flex-1">计算批次列表</span>
            <span className="mr-1.5">共2条</span>
            <Dropdown id="size2" label="每页条数" value="5条/页" className="mr-[5px] h-[37px] w-[112px]" />
            <PageLink>↩上一页</PageLink>
            <span className="w-14 text-center text-sm text-[#e8265e]">1</span>
            <PageLink>下一页↪</PageLink>
          </div>
        </div>
        <div className="h-[5px] shrink-0" />
        <SectionBar>详情</SectionBar>
        <div className="mx-[5px] mt-[3px] flex h-[22px] shrink-0 items-center gap-1.5 rounded bg-[#dcebcb] px-1 text-sm font-bold text-[#1f4a1f]">
          <Icon name="tick" size="size-3" />
          Pass
        </div>
        <div className="mx-[5px] mt-0.5 min-h-0 flex-1 overflow-hidden border border-[#cdc7c2] bg-[#fcfcfc]">
          <table className="w-full table-fixed border-collapse text-sm text-[#1a1a1a]">
            <thead>
              <tr className="h-[33px] border-b border-[#f0f0f0] text-[15px] text-[#c2c2c2]">
                <th className="w-[206px] border-r border-[#f0f0f0] pl-1 text-left font-medium">名称</th>
                <th className="pr-1 text-right font-medium">值</th>
              </tr>
            </thead>
            <tbody>
              {PROPS.map(([name, value]) => (
                <tr key={name} className="h-[23px]">
                  <td className="border-r border-[#f0f0f0]">
                    <span className="flex items-center gap-1 pl-0.5"><Icon name="field" />{name}</span>
                  </td>
                  <td className={clsx('pr-px text-right', value === 'false' && 'bg-[#f9cfc5]')}>{value}</td>
                </tr>
              ))}
            </tbody>
          </table>
        </div>
        <p className="h-6 shrink-0 px-1.5 pt-1 text-[#c2c2c2]">通过列表中的信息判断当前节点是否需要使用FP32</p>
      </div>
    </Panel>
  );
}

export default function App() {
  return (
    <div className="flex h-screen flex-col overflow-hidden bg-[#f6f5f4] font-['Noto_Sans','Noto_Sans_CJK_SC',sans-serif] text-[15px] leading-5">
      <TopBars />
      <main className="grid min-h-0 flex-1 grid-cols-[402fr_1003fr_507fr] gap-1">
        <div className="flex min-h-0 min-w-0 flex-col gap-1">
          <ProjectPanel />
          <ModelPanel />
        </div>
        <div className="flex min-h-0 min-w-0 flex-col gap-1">
          <EditorPanel />
          <ResultPanel />
        </div>
        <PropertyPanel />
      </main>
      <footer className="grid h-[30px] shrink-0 grid-cols-[1409fr_507fr] gap-1">
        <div className="col-start-2 flex items-center pl-[9px]">
          <Grip />
          <div className="ml-0.5 flex h-full w-[154px] items-center border-t border-r border-[#a9a9a9] bg-linear-to-r from-[#9e9e9e] from-43% to-[#f6f5f4] to-43% text-[#2e3436]">
            <span className="w-full text-center whitespace-nowrap">119兆（共 280兆）</span>
          </div>
          <button aria-label="回收内存"><Icon name="trash" /></button>
          <Grip />
        </div>
      </footer>
    </div>
  );
}
